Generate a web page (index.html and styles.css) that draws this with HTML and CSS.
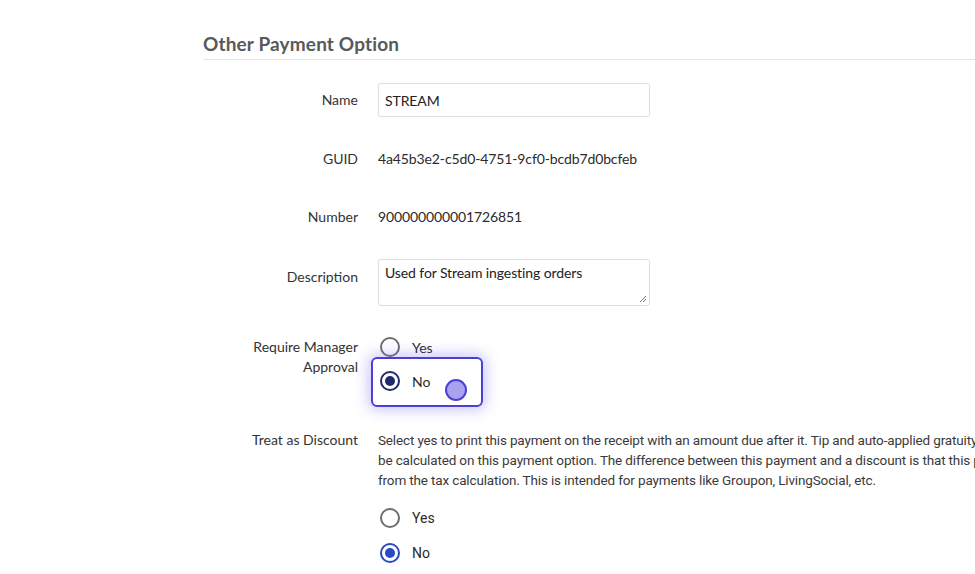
FILE: index.html
```html
<!DOCTYPE html>
<html lang="en">
<head>
<meta charset="utf-8">
<title>Other Payment Option</title>
<link rel="stylesheet" href="styles.css">
</head>
<body>
<main class="page">
  <h2 class="title">Other Payment Option</h2>
  <div class="form">
    <div class="row">
      <div class="label">Name</div>
      <div class="field"><div class="input">STREAM</div></div>
    </div>
    <div class="row">
      <div class="label">GUID</div>
      <div class="field text">4a45b3e2-c5d0-4751-9cf0-bcdb7d0bcfeb</div>
    </div>
    <div class="row">
      <div class="label">Number</div>
      <div class="field text">900000000001726851</div>
    </div>
    <div class="row row-desc">
      <div class="label">Description</div>
      <div class="field">
        <div class="textarea">Used for Stream ingesting orders
          <svg class="grip" width="8" height="8" viewBox="0 0 8 8"><path d="M7 1 L1 7 M7 4 L4 7" stroke="#777" stroke-width="1"/></svg>
        </div>
      </div>
    </div>
    <div class="row row-radio">
      <div class="label two">Require Manager<br>Approval</div>
      <div class="field">
        <div class="option"><span class="radio"></span><span>Yes</span></div>
        <div class="option focus-wrap">
          <span class="radio on dark"></span><span>No</span>
          <span class="focus-box"></span>
          <span class="click-dot"></span>
        </div>
      </div>
    </div>
    <div class="row row-disc">
      <div class="label two">Treat as Discount</div>
      <div class="field">
        <p class="help">Select yes to print this payment on the receipt with an amount due after it. Tip and auto-applied gratuity will not<br>be calculated on this payment option. The difference between this payment and a discount is that this payment is not excluded<br>from the tax calculation. This is intended for payments like Groupon, LivingSocial, etc.</p>
        <div class="option"><span class="radio"></span><span>Yes</span></div>
        <div class="option"><span class="radio on"></span><span>No</span></div>
      </div>
    </div>
  </div>
</main>
</body>
</html>
```
FILE: styles.css
```css
html, body {
  margin: 0;
  padding: 0;
  background: #fff;
  overflow: hidden;
}
body {
  font-family: Lato, "Open Sans", sans-serif;
  color: #2b2b2b;
  font-size: 14px;
  width: 975px;
  height: 574px;
}
.page {
  padding: 33px 0 0 203px;
}
.title {
  margin: 0;
  font-size: 19px;
  font-weight: 700;
  color: #595959;
  line-height: 22px;
  padding-bottom: 4px;
  border-bottom: 1px solid #e6e6e6;
  letter-spacing: 0.15px;
}
.form {
  padding-top: 23px;
}
.row {
  display: flex;
  gap: 20px;
  margin-bottom: 24.5px;
}
.label {
  width: 155px;
  flex: none;
  text-align: right;
  line-height: 34px;
  color: #333;
}
.label.two {
  line-height: 20px;
  padding-top: 7px;
}
.field {
  flex: 1;
  min-width: 0;
}
.field.text {
  line-height: 34px;
  color: #2b2b2b;
  letter-spacing: -0.12px;
}
.input {
  width: 272px;
  height: 34px;
  box-sizing: border-box;
  border: 1px solid #dedede;
  border-radius: 3px;
  padding: 0 6px;
  line-height: 33px;
  color: #222;
  letter-spacing: -0.1px;
}
.row-desc .label {
  line-height: 20px;
  padding-top: 8px;
}
.textarea {
  position: relative;
  width: 272px;
  height: 47px;
  box-sizing: border-box;
  border: 1px solid #dedede;
  border-radius: 3px;
  padding: 4px 6px;
  line-height: 18px;
  color: #222;
  letter-spacing: -0.1px;
}
.grip {
  position: absolute;
  right: 2px;
  bottom: 2px;
}
.row-radio {
  margin-bottom: 32px;
}
.option {
  display: flex;
  align-items: center;
  gap: 12px;
  height: 34px;
  padding-left: 2px;
  color: #2b2b2b;
}
.row-disc .option {
  height: 35px;
}
.radio {
  width: 20px;
  height: 20px;
  box-sizing: border-box;
  border: 2px solid #6e6e6e;
  border-radius: 50%;
  flex: none;
  display: flex;
  align-items: center;
  justify-content: center;
}
.radio.on {
  border-color: #2a49c4;
}
.radio.on::after {
  content: "";
  width: 10px;
  height: 10px;
  border-radius: 50%;
  background: #2a49c4;
}
.radio.dark {
  border-color: #1d2b6e;
}
.radio.dark::after {
  background: #1d2b6e;
}
.focus-wrap {
  position: relative;
}
.focus-box {
  position: absolute;
  left: -7px;
  top: -7px;
  width: 112px;
  height: 50px;
  box-sizing: border-box;
  border: 2px solid #4a3fd8;
  border-radius: 6px;
  box-shadow: 0 0 14px 3px rgba(110, 95, 240, 0.35);
  pointer-events: none;
}
.click-dot {
  position: absolute;
  left: 67px;
  top: 15px;
  width: 22px;
  height: 22px;
  box-sizing: border-box;
  border-radius: 50%;
  border: 2px solid #4b40d8;
  background: #a9a3ef;
}
.row-disc .label {
  padding-top: 0;
}
.help {
  margin: 0 0 10px;
  font-family: Roboto, sans-serif;
  font-size: 13.5px;
  letter-spacing: -0.15px;
  line-height: 20px;
  color: #3a3a3a;
  white-space: nowrap;
}
.row-disc .option {
  font-family: Roboto, sans-serif;
}
```
